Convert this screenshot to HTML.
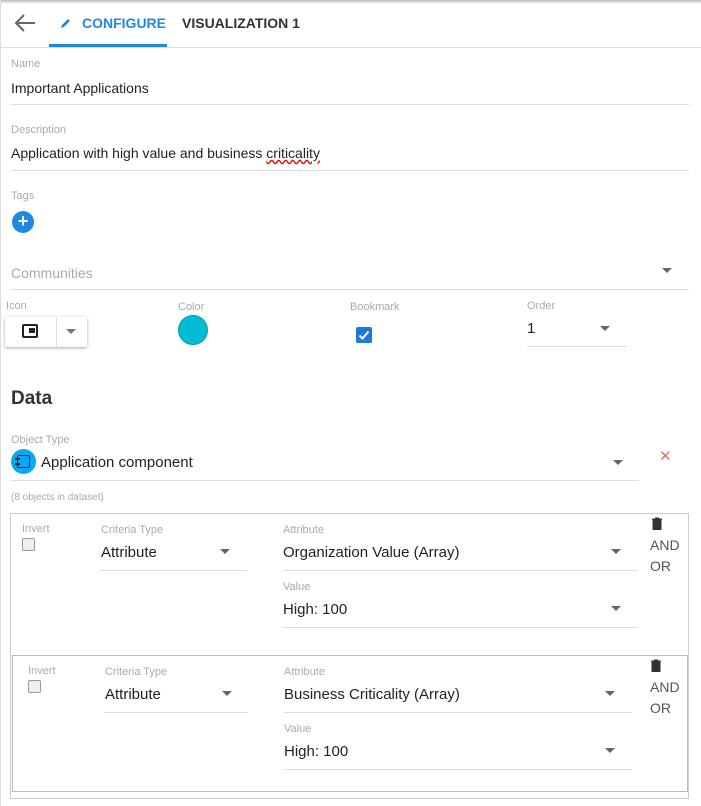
<!DOCTYPE html>
<html><head><style>
*{margin:0;padding:0;box-sizing:border-box}
body{width:701px;height:806px;position:relative;background:#fff;font-family:"Liberation Sans",sans-serif;color:#222;overflow:hidden}
.a{position:absolute}
.lbl{position:absolute;font-size:11px;color:#aaa}
.val{position:absolute;font-size:15px;color:#222}
.ln{position:absolute;height:1px;background:#ddd}
.tri{position:absolute;width:0;height:0;border-left:5px solid transparent;border-right:5px solid transparent;border-top:5px solid #666}
.cb{position:absolute;width:13px;height:13px;border:1px solid #999;border-radius:2px;background:#eee}
</style></head><body>
<div class="a" style="left:0;top:0;width:701px;height:4px;background:linear-gradient(#bbb,#fff)"></div>
<div class="a" style="left:0;top:0;width:1px;height:806px;background:#ddd"></div>
<svg class="a" style="left:14px;top:13px" width="22" height="20" viewBox="0 0 22 20"><path d="M21 10H3M10 2L2 10l8 8" stroke="#666" stroke-width="2" fill="none"/></svg>
<svg class="a" style="left:60px;top:17px" width="12" height="12" viewBox="0 0 12 12"><path d="M1 11l1-3 6-6 2 2-6 6z" fill="#1e88e5"/></svg>
<div class="a" style="left:82px;top:15px;font-size:14px;font-weight:bold;color:#1e88e5">CONFIGURE</div>
<div class="a" style="left:182px;top:15px;font-size:14px;font-weight:bold;color:#333">VISUALIZATION 1</div>
<div class="a" style="left:49px;top:44px;width:118px;height:3px;background:#1e88e5"></div>
<div class="ln" style="left:0;top:47px;width:701px"></div>

<div class="lbl" style="left:11px;top:58px">Name</div>
<div class="val" style="left:11px;top:80px;font-size:14px">Important Applications</div>
<div class="ln" style="left:11px;top:104px;width:678px"></div>
<div class="lbl" style="left:11px;top:124px">Description</div>
<div class="val" style="left:11px;top:145px;font-size:14px">Application with high value and business <span style="text-decoration:underline wavy red">criticality</span></div>
<div class="ln" style="left:11px;top:170px;width:678px"></div>
<div class="lbl" style="left:11px;top:190px">Tags</div>
<div class="a" style="left:12px;top:211px;width:22px;height:22px;border-radius:50%;background:#1e88e5;color:#fff;font-size:18px;line-height:21px;text-align:center;font-weight:bold">+</div>
<div class="a" style="left:11px;top:265px;font-size:14px;color:#aaa">Communities</div>
<div class="tri" style="left:662px;top:268px"></div>
<div class="ln" style="left:11px;top:289px;width:678px"></div>

<div class="lbl" style="left:6px;top:300px">Icon</div>
<div class="a" style="left:5px;top:317px;width:82px;height:30px;border-radius:2px;box-shadow:0 1px 3px rgba(0,0,0,.35);background:#fff"></div>
<div class="a" style="left:56px;top:317px;width:1px;height:30px;background:#ddd"></div>
<div class="a" style="left:22px;top:324px;width:16px;height:14px;border:2px solid #222;border-radius:2px"></div>
<div class="a" style="left:29px;top:328px;width:6px;height:5px;background:#222"></div>
<div class="tri" style="left:66px;top:329px;border-top-color:#777"></div>
<div class="lbl" style="left:178px;top:301px">Color</div>
<div class="a" style="left:178px;top:315px;width:30px;height:30px;border-radius:50%;background:#00bcd4;border:1px solid #0a9aab"></div>
<div class="lbl" style="left:350px;top:301px">Bookmark</div>
<div class="a" style="left:356px;top:327px;width:16px;height:16px;background:#1e7ad8;border-radius:2px"></div>
<svg class="a" style="left:356px;top:327px" width="16" height="16"><path d="M3.5 8.5l3 3 6-7" stroke="#fff" stroke-width="2" fill="none"/></svg>
<div class="lbl" style="left:527px;top:300px">Order</div>
<div class="val" style="left:527px;top:320px">1</div>
<div class="tri" style="left:600px;top:326px"></div>
<div class="ln" style="left:527px;top:346px;width:100px"></div>

<div class="a" style="left:11px;top:388px;font-size:19px;font-weight:bold;color:#333">Data</div>
<div class="lbl" style="left:11px;top:434px">Object Type</div>
<div class="a" style="left:11px;top:449px;width:25px;height:25px;border-radius:50%;background:#03a9f4"></div>
<div class="a" style="left:17px;top:455px;width:13px;height:13px;border:1.5px solid #222;border-radius:2px"></div>
<div class="a" style="left:15px;top:458px;width:5px;height:2px;background:#222"></div>
<div class="a" style="left:15px;top:463px;width:5px;height:2px;background:#222"></div>
<div class="val" style="left:41px;top:454px">Application component</div>
<div class="tri" style="left:613px;top:460px"></div>
<div class="a" style="left:659px;top:447px;color:#e57373;font-size:15px">✕</div>
<div class="ln" style="left:11px;top:480px;width:628px"></div>
<div class="lbl" style="left:11px;top:492px;font-size:10px">(8 objects in dataset)</div>

<div class="a" style="left:10px;top:513px;width:679px;height:286px;border:1px solid #ccc"></div>
<div class="a" style="left:12px;top:655px;width:676px;height:137px;border:1px solid #bbb"></div>

<div class="lbl" style="left:22px;top:523px">Invert</div>
<div class="cb" style="left:22px;top:538px"></div>
<div class="lbl" style="left:101px;top:524px">Criteria Type</div>
<div class="val" style="left:101px;top:544px">Attribute</div>
<div class="tri" style="left:220px;top:549px"></div>
<div class="ln" style="left:100px;top:570px;width:147px"></div>
<div class="lbl" style="left:283px;top:524px">Attribute</div>
<div class="val" style="left:283px;top:544px">Organization Value (Array)</div>
<div class="tri" style="left:611px;top:549px"></div>
<div class="ln" style="left:283px;top:570px;width:355px"></div>
<div class="lbl" style="left:283px;top:581px">Value</div>
<div class="val" style="left:283px;top:601px">High: 100</div>
<div class="tri" style="left:611px;top:606px"></div>
<div class="ln" style="left:283px;top:627px;width:355px"></div>
<svg class="a" style="left:652px;top:517px" width="10" height="13"><path d="M0 2h10M3 1h4M1 3h8v10H1z" stroke="#333" fill="#333"/></svg>
<div class="a" style="left:650px;top:535px;font-size:14px;color:#555;line-height:21px">AND<br>OR</div>

<div class="lbl" style="left:28px;top:665px">Invert</div>
<div class="cb" style="left:28px;top:680px"></div>
<div class="lbl" style="left:105px;top:666px">Criteria Type</div>
<div class="val" style="left:105px;top:686px">Attribute</div>
<div class="tri" style="left:222px;top:691px"></div>
<div class="ln" style="left:104px;top:712px;width:144px"></div>
<div class="lbl" style="left:284px;top:666px">Attribute</div>
<div class="val" style="left:284px;top:686px">Business Criticality (Array)</div>
<div class="tri" style="left:605px;top:691px"></div>
<div class="ln" style="left:284px;top:712px;width:348px"></div>
<div class="lbl" style="left:284px;top:723px">Value</div>
<div class="val" style="left:284px;top:743px">High: 100</div>
<div class="tri" style="left:605px;top:748px"></div>
<div class="ln" style="left:284px;top:769px;width:348px"></div>
<svg class="a" style="left:651px;top:659px" width="10" height="13"><path d="M0 2h10M3 1h4M1 3h8v10H1z" stroke="#333" fill="#333"/></svg>
<div class="a" style="left:650px;top:677px;font-size:14px;color:#555;line-height:21px">AND<br>OR</div>
</body></html>
